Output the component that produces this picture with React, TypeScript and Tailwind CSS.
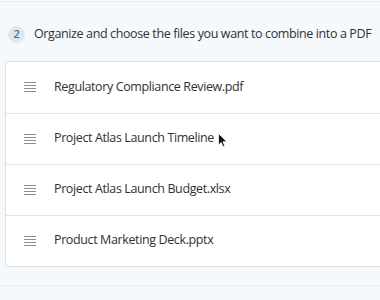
const files = [
  'Regulatory Compliance Review.pdf',
  'Project Atlas Launch Timeline',
  'Project Atlas Launch Budget.xlsx',
  'Product Marketing Deck.pptx',
];

function DragHandle() {
  return (
    <svg width="12" height="10" viewBox="0 0 12 10" className="shrink-0">
      {[0.5, 3.5, 6.5, 9.5].map((y) => (
        <line key={y} x1="0" x2="12" y1={y} y2={y} stroke="#8a8f94" strokeWidth="1" />
      ))}
    </svg>
  );
}

export default function App() {
  return (
    <div
      className="relative h-[300px] w-[380px] overflow-hidden bg-[#f6f9fc] text-[#2f3133]"
      style={{ fontFamily: '"Open Sans", sans-serif' }}
    >
      <div className="mt-[1px] border-t border-[#e6ebef]" />

      {/* Step heading */}
      <div className="flex items-center gap-[9px] pl-[8px] pt-[23px] tracking-[-0.38px]">
        <span className="flex h-[17px] w-[17px] items-center justify-center rounded-full bg-[#dce7f0] text-[11px] font-semibold text-[#4b6f8e]">
          2
        </span>
        <span className="whitespace-nowrap text-[12.5px]">Organize and choose the files you want to combine into a PDF</span>
      </div>

      {/* File list */}
      <div className="ml-[5px] mt-[17px] w-[400px] rounded-[4px] border border-[#dcdfe2] bg-white">
        {files.map((name, i) => (
          <div
            key={name}
            className={`flex h-[51px] items-center gap-[18px] pl-[18px] ${i > 0 ? 'border-t border-[#e3e5e8]' : ''}`}
          >
            <DragHandle />
            <span className="whitespace-nowrap text-[12.5px] tracking-[-0.38px]">{name}</span>
          </div>
        ))}
      </div>

      <div className="mt-[18px] border-t border-[#e9eef2]" />

      {/* Mouse cursor */}
      <svg width="10" height="15" viewBox="0 0 10 15" className="absolute left-[218px] top-[133px]">
        <path d="M0.5 0.5 L0.5 12 L3.2 9.5 L5 13.8 L6.8 13 L5 8.8 L8.8 8.8 Z" fill="#111" stroke="#fff" strokeWidth="0.8" />
      </svg>
    </div>
  );
}
